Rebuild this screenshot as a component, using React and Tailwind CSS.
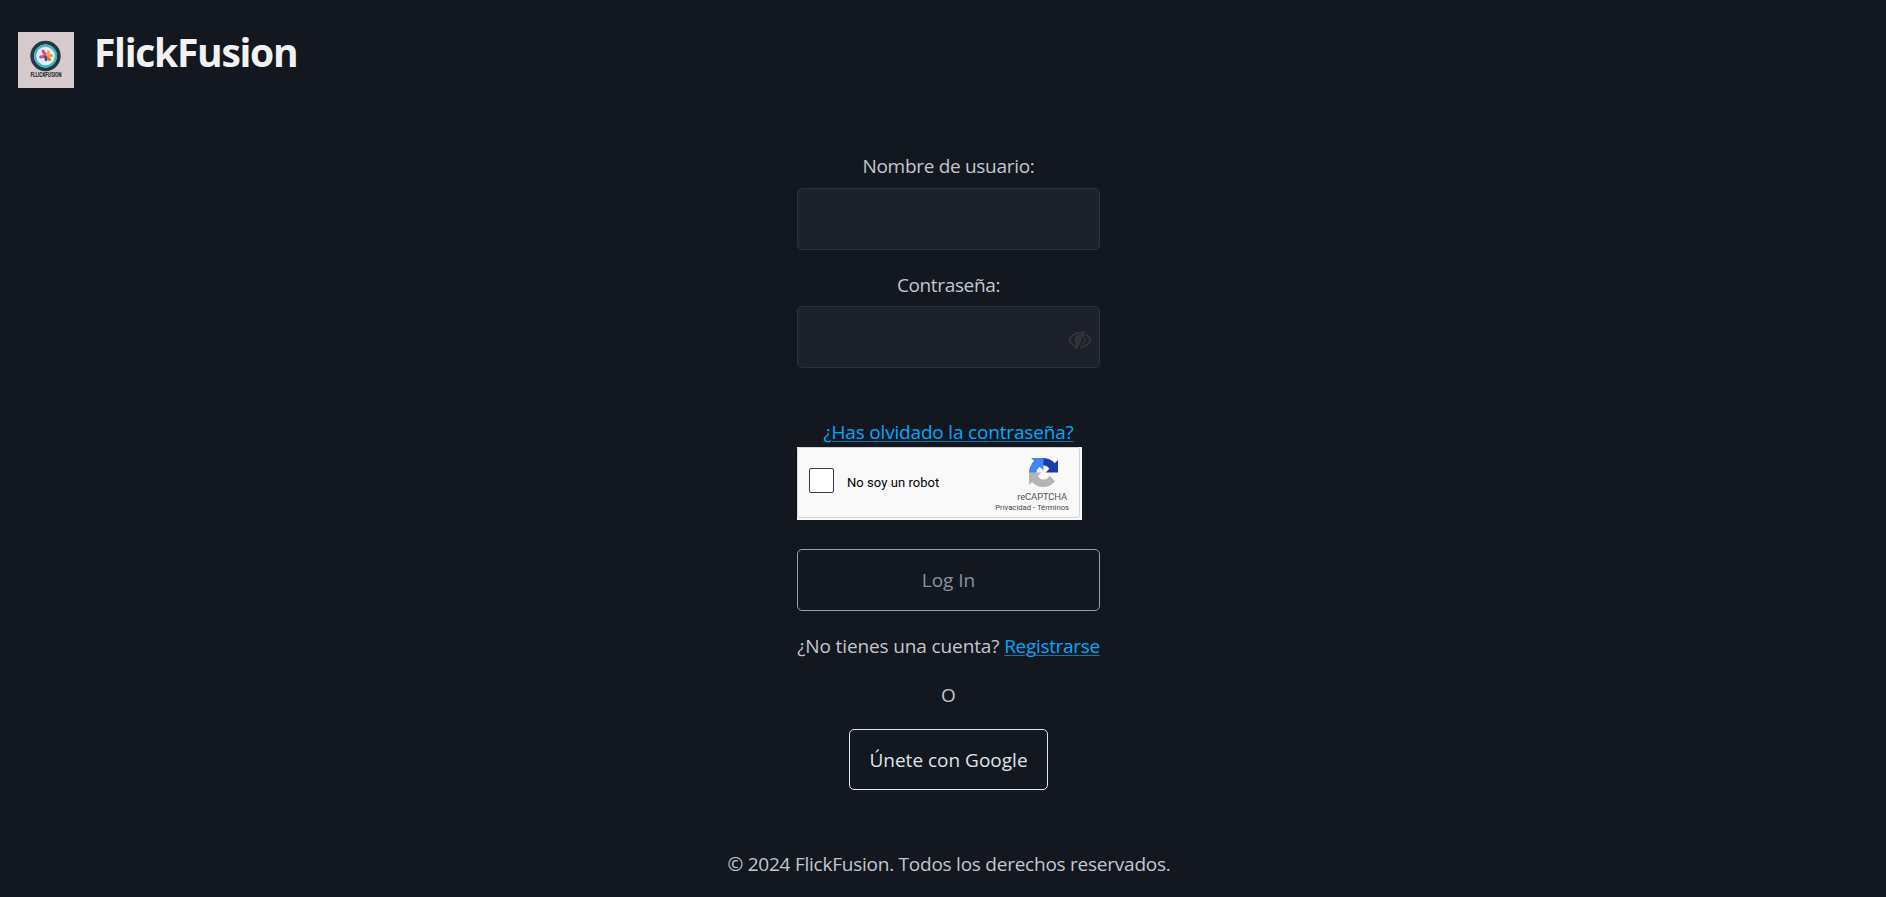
const LINK = "text-[#01aaff] underline decoration-[#0378b3] decoration-1 underline-offset-[2px]";

function Logo() {
  return (
    <svg className="h-14 w-14 shrink-0" viewBox="0 0 56 56">
      <rect width="56" height="56" fill="#d6cbcc" />
      <circle cx="27.500" cy="24" r="13.300" fill="#fff" stroke="#263940" strokeWidth="3.800" />
      <circle cx="27.500" cy="24" r="10.400" fill="#e9eef2" stroke="#39b9c6" strokeWidth="2.200" />
      <g strokeWidth="3" strokeLinecap="round" fill="none">
        <path d="M27 22.500l-2-3.500" stroke="#ef3f74" />
        <path d="M29.500 22l1-2" stroke="#f8a04b" />
        <path d="M29.500 24l4-.5" stroke="#f79a3c" />
        <path d="M26 24.500l-3.300.6" stroke="#c0529c" />
        <path d="M29.500 26l2 1.500" stroke="#e46a4e" />
        <path d="M27.500 25l.500 3" stroke="#274f86" strokeWidth="2.500" />
      </g>
      <text x="12.500" y="45" textLength="31" lengthAdjust="spacingAndGlyphs" fontFamily="Roboto, sans-serif" fontSize="7" fontWeight="700" fill="#151515">
        FLLICKFUSION
      </text>
    </svg>
  );
}

function EyeOff() {
  return (
    <svg className="absolute right-[7px] top-[24px] h-[19px] w-[24px]" viewBox="0 0 24 19" fill="none" stroke="#333437" strokeWidth="1.800" strokeLinecap="round" strokeLinejoin="round">
      <path d="M14 2.200C7.500.8 3.300 5 1.200 9.200c1.500 2.800 3.500 4.900 6.200 6.100" />
      <path d="M18.300 4.200c2 1.300 3.500 3 4.500 5-2.300 4.200-5.700 6.700-10 6.800" />
      <path d="M16 1.200L8 17" strokeWidth="2.600" />
      <path d="M12.500 4.500C8.500 4 6.300 8.500 8.500 12M10.300 6.500C9 7.300 9 9 9.400 10" strokeWidth="2" />
      <path d="M16.700 6.500c.8 3-.3 5.300-2.700 6.500" strokeWidth="1.500" />
    </svg>
  );
}

function RecaptchaMark() {
  return (
    <svg className="h-[29px] w-[29px]" viewBox="0 0 64 64">
      <path d="M64 31.955l-.016-1.370V4.687l-7.160 7.160C50.964 4.674 42.033.093 32.034.093c-10.406 0-19.650 4.960-25.490 12.640l11.736 11.860a15.550 15.550 0 0 1 4.754-5.334c2.050-1.600 4.952-2.906 8.968-2.906.485 0 .86.057 1.135.163 4.976.393 9.288 3.140 11.828 7.124l-8.307 8.307L64 31.953" fill="#1c3aa9" />
      <path d="M31.862.094l-1.370.016H4.594l7.160 7.160C4.580 13.147 0 22.060 0 32.060c0 10.406 4.960 19.650 12.640 25.490L24.500 45.812a15.550 15.550 0 0 1-5.334-4.754c-1.600-2.050-2.906-4.952-2.906-8.968 0-.485.057-.86.163-1.135.393-4.976 3.140-9.288 7.124-11.828l8.307 8.307L31.860.095" fill="#4285f4" />
      <path d="M.001 32.045l.016 1.370v25.898l7.160-7.160c5.873 7.173 14.774 11.754 24.773 11.754 10.406 0 19.650-4.960 25.490-12.640l-11.736-11.860a15.550 15.550 0 0 1-4.754 5.334c-2.050 1.600-4.952 2.906-8.968 2.906-.485 0-.86-.057-1.135-.163-4.976-.393-9.288-3.140-11.828-7.124l8.307-8.307-27.325-.009" fill="#b4b4b4" />
    </svg>
  );
}

function Recaptcha() {
  return (
    <div className="h-[73px] w-[285px] bg-[#f9f9f9] font-[Roboto,sans-serif]">
      <div className="flex h-[71px] w-[283px] justify-between rounded-[3px] border border-[#d3d3d3] bg-[#f9f9f9]">
        <div className="flex items-start pl-[11px] pt-5">
          <div className="h-[25px] w-[25px] rounded-[2px] border border-[#3c3c3c] bg-white" />
          <span className="ml-[13px] mt-[7px] text-[13px] leading-4 tracking-[0.05px] text-black">No soy un robot</span>
        </div>
        <div className="flex flex-col items-end pr-[10px] pt-[10px] text-[#555]">
          <div className="mr-[11px] h-[33px]"><RecaptchaMark /></div>
          <span className="mr-[2px] whitespace-nowrap text-[9.400px] leading-[12px] tracking-[-0.1px]">reCAPTCHA</span>
          <span className="whitespace-nowrap text-[7.700px] leading-[9px] text-[#444]">Privacidad - Términos</span>
        </div>
      </div>
    </div>
  );
}

export default function App() {
  return (
    <div className="flex h-[897px] flex-col overflow-hidden bg-[#13171f] font-['Open_Sans','Noto_Sans',sans-serif] text-[19px] leading-[30px] text-[#c2c7d0]">
      <header className="flex h-[150px] items-start pl-[18px] pt-8">
        <Logo />
        <h1 className="-mt-[4px] ml-5 text-[39px] font-bold leading-[48px] tracking-[-1.3px] text-[#f0f1f3]">FlickFusion</h1>
      </header>
      <main className="ml-[797px] flex w-[303px] flex-col items-center whitespace-nowrap">
        <label className="mt-[1px] tracking-[-0.3px]">Nombre de usuario:</label>
        <div className="mt-[7px] h-[62px] w-full rounded-[5px] border border-[#2a3140] bg-[#1c212c]" />
        <label className="mt-[20px] tracking-[-0.35px]">Contraseña:</label>
        <div className="relative mt-[6px] h-[62px] w-full rounded-[5px] border border-[#2a3140] bg-[#1c212c]">
          <EyeOff />
        </div>
        <a className={`mt-[49px] tracking-[-0.18px] ${LINK}`}>¿Has olvidado la contraseña?</a>
        <div className="w-full"><Recaptcha /></div>
        <button className="mt-[29px] h-[62px] w-full rounded-[5px] border border-[#969eaf] text-[#8891a4]">Log In</button>
        <p className="mt-[20px] tracking-[-0.12px]">
          ¿No tienes una cuenta? <a className={`tracking-[-0.32px] ${LINK}`}>Registrarse</a>
        </p>
        <p className="mt-[19px]">O</p>
        <button className="mt-[19px] h-[61px] w-[199px] rounded-[5px] border border-[#dfe3eb] text-[#dfe3eb]">Únete con Google</button>
      </main>
      <footer className="ml-[727px] mt-[59px] w-[444px] whitespace-nowrap text-center tracking-[-0.24px]">
        © 2024 FlickFusion. Todos los derechos reservados.
      </footer>
    </div>
  );
}
